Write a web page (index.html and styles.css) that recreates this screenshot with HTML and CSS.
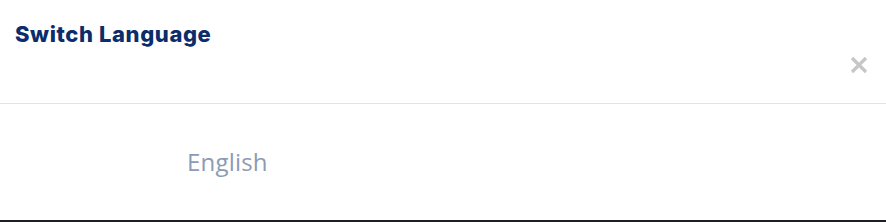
FILE: index.html
```html
<!DOCTYPE html>
<html>
<head>
<meta charset="utf-8">
<link rel="stylesheet" href="styles.css">
</head>
<body>
<div class="modal">
  <div class="header">
    <h2 class="title">Switch Language</h2>
    <button class="close" aria-label="Close">
      <svg width="18" height="18" viewBox="0 0 18 18"><path d="M2 2 L16 16 M16 2 L2 16" stroke="#c6c6c6" stroke-width="3.2" stroke-linecap="butt"/></svg>
    </button>
  </div>
  <div class="body">
    <div class="lang">English</div>
  </div>
</div>
</body>
</html>
```
FILE: styles.css
```css
html, body {
  margin: 0;
  padding: 0;
  background: #ffffff;
}
.modal {
  width: 886px;
  height: 222px;
  box-sizing: border-box;
  border-bottom: 2px solid #1d1f22;
  display: flex;
  flex-direction: column;
}
.header {
  height: 104px;
  box-sizing: border-box;
  border-bottom: 1px solid #e3e3e3;
  display: flex;
  justify-content: space-between;
  align-items: flex-start;
  padding: 0 18px 0 15px;
}
.title {
  margin: 20px 0 0 0;
  font-family: "Inter", "Liberation Sans", sans-serif;
  font-weight: 800;
  font-size: 22px;
  line-height: 28px;
  color: #0b2d6b;
  letter-spacing: 0.6px;
}
.close {
  margin-top: 56px;
  width: 18px;
  height: 18px;
  padding: 0;
  border: 0;
  background: none;
  display: flex;
}
.body {
  flex: 1;
  padding-left: 187px;
  padding-top: 43px;
}
.lang {
  font-family: "Open Sans", "Noto Sans", sans-serif;
  font-size: 24px;
  line-height: 30px;
  color: #8b9bb6;
  letter-spacing: 0.2px;
}
```
